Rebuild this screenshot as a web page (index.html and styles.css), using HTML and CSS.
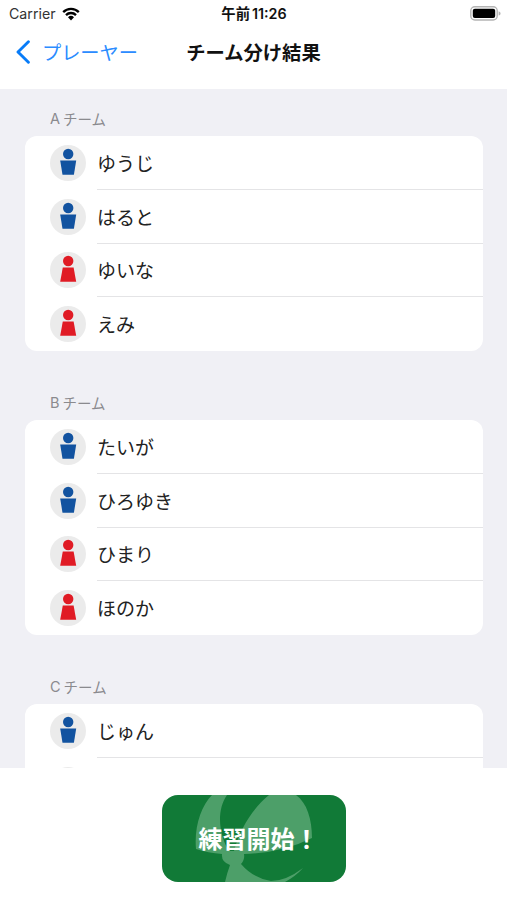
FILE: index.html
```
<!DOCTYPE html>
<html lang="ja">
<head>
  <meta charset="utf-8">
  <title>チーム分け結果</title>
  <link rel="stylesheet" href="styles.css">
</head>
<body>
  <svg class="defs" width="0" height="0">
    <symbol id="boy" viewBox="0 0 36 36">
      <circle cx="18.2" cy="9" r="5.2"/>
      <path d="M10.2 15.5h16l-2.3 14.2h-11.4z"/>
    </symbol>
    <symbol id="girl" viewBox="0 0 36 36">
      <circle cx="18.2" cy="9" r="5.2"/>
      <path d="M12.8 15.5h10.8l2.6 14.2h-16z"/>
    </symbol>
  </svg>

  <header>
    <div class="status-bar">
      <div class="carrier">
        <span>Carrier</span>
        <svg class="wifi" viewBox="0 0 18 14" width="18" height="14">
          <path d="M1.2 5.1a11 11 0 0 1 15.6 0M4 8.1a7 7 0 0 1 10 0" fill="none" stroke="#000" stroke-width="2.3"/>
          <path d="M9 13.4l-3-3.1a4.3 4.3 0 0 1 6 0z"/>
        </svg>
      </div>
      <div class="time"><span>午前</span><span>11:26</span></div>
      <svg class="battery" viewBox="0 0 31 15" width="31" height="15">
        <rect x=".8" y=".8" width="26.4" height="13.2" rx="4" fill="#fff" stroke="#b4b4b4" stroke-width="1.4"/>
        <rect x="2.8" y="2.8" width="22.4" height="9.2" rx="2"/>
        <path d="M28.6 5.2c2.6.8 2.6 3.6 0 4.4z" fill="#b4b4b4"/>
      </svg>
    </div>
    <nav>
      <a class="back">
        <svg viewBox="0 0 14 24" width="14" height="24">
          <path d="M12.4 1.8L2 12l10.4 10.2" fill="none" stroke="#087cf8" stroke-width="2.9" stroke-linecap="round" stroke-linejoin="round"/>
        </svg>
        <span>プレーヤー</span>
      </a>
      <h1>チーム分け結果</h1>
    </nav>
  </header>

  <main>
    <section>
      <h2><span>A</span>チーム</h2>
      <ul>
        <li><svg class="avatar boy"><use href="#boy"/></svg><span>ゆうじ</span></li>
        <li><svg class="avatar boy"><use href="#boy"/></svg><span>はると</span></li>
        <li><svg class="avatar girl"><use href="#girl"/></svg><span>ゆいな</span></li>
        <li><svg class="avatar girl"><use href="#girl"/></svg><span>えみ</span></li>
      </ul>
    </section>
    <section>
      <h2><span>B</span>チーム</h2>
      <ul>
        <li><svg class="avatar boy"><use href="#boy"/></svg><span>たいが</span></li>
        <li><svg class="avatar boy"><use href="#boy"/></svg><span>ひろゆき</span></li>
        <li><svg class="avatar girl"><use href="#girl"/></svg><span>ひまり</span></li>
        <li><svg class="avatar girl"><use href="#girl"/></svg><span>ほのか</span></li>
      </ul>
    </section>
    <section>
      <h2><span>C</span>チーム</h2>
      <ul>
        <li><svg class="avatar boy"><use href="#boy"/></svg><span>じゅん</span></li>
        <li><svg class="avatar"></svg><span></span></li>
      </ul>
    </section>
  </main>

  <footer>
    <button type="button" class="start">
      <svg class="shuttle" viewBox="0 0 184 87" width="184" height="87">
        <path d="M50 0C39 11 32 32 34 54Q46 58 60 59Q59 67 68 70Q65 78 63 87H123Q134 81 141 73Q124 86 109 86Q91 83 79 69Q83 65 82 59Q120 58 150 43C150 24 145 8 134 0H107C90 14 78 34 72 56H67C57 40 54 16 65 0Z"/>
      </svg>
      <span>練習開始！</span>
    </button>
  </footer>
</body>
</html>
```
FILE: styles.css
```
* {
  box-sizing: border-box;
}

body {
  margin: 0;
  height: 900px;
  display: flex;
  flex-direction: column;
  overflow: hidden;
  background-color: #fff;
  color: #222;
  font-family: Inter, "Noto Sans CJK JP", sans-serif;
}

.defs {
  position: absolute;
}

header {
  height: 89px;
  flex: none;
}

.status-bar {
  display: grid;
  grid-template-columns: 1fr auto 1fr;
  align-items: center;
  height: 27px;
  padding: 0 6px 0 9px;
}

.carrier {
  display: flex;
  align-items: center;
  gap: 6px;
  font-size: 14.2px;
  color: #333;
}

.time {
  display: flex;
  align-items: baseline;
  gap: 2px;
  padding: 0 2px 2px 0;
  font-size: 14.3px;
  font-weight: 600;
  color: #111;
}

.battery {
  justify-self: end;
}

nav {
  display: grid;
  grid-template-columns: 1fr auto 1fr;
  align-items: center;
  height: 50px;
  padding: 0 16px;
}

.back {
  display: flex;
  align-items: center;
  gap: 12px;
  font-size: 19.2px;
  color: #2b8cff;
}

h1 {
  margin: 0;
  font-size: 19.3px;
  font-weight: 700;
  color: #111;
}

main {
  height: 679px;
  flex: none;
  overflow: hidden;
  padding: 0 24px 0 25px;
  background-color: #f0f0f5;
}

section {
  height: 284px;
}

h2 {
  display: flex;
  align-items: center;
  gap: 3px;
  height: 47px;
  margin: 0;
  padding: 11px 0 0 25px;
  font-size: 14.5px;
  font-weight: 400;
  color: #8a8a8e;
}

ul {
  margin: 0;
  padding: 0;
  list-style: none;
  background-color: #fff;
  border-radius: 12px;
}

li {
  display: flex;
  align-items: center;
  gap: 11px;
  height: 53.75px;
  padding-left: 25px;
}

li span {
  flex: 1;
  display: flex;
  align-items: center;
  height: 100%;
  font-size: 19px;
  border-bottom: 1px solid #e4e4e6;
}

li:last-child span {
  padding-bottom: 1px;
  border-bottom: none;
}

.avatar {
  width: 36px;
  height: 36px;
  border-radius: 50%;
  background-color: #ebebeb;
}

.boy {
  fill: #1253a0;
}

.girl {
  fill: #e01b24;
}

footer {
  display: flex;
  justify-content: center;
  padding-top: 27px;
}

.start {
  position: relative;
  width: 184px;
  height: 87px;
  padding: 0 0 2px 10px;
  border: none;
  border-radius: 16px;
  overflow: hidden;
  background-color: #117a37;
  color: #fff;
  font-family: inherit;
  font-size: 24px;
  font-weight: 700;
}

.shuttle {
  position: absolute;
  left: 0;
  top: 0;
  fill: #4d9f69;
}

.start span {
  position: relative;
}
```
